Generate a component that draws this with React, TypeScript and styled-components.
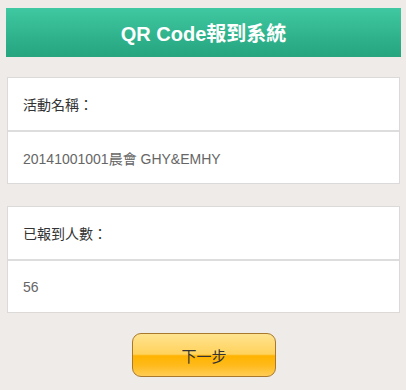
import React from "react";
import styled, { createGlobalStyle } from "styled-components";

const Global = createGlobalStyle`
  html, body { margin: 0; padding: 0; background: #eeebe9; }
  body { font-family: "Liberation Sans", "Noto Sans CJK TC", sans-serif; }
`;

const Page = styled.div`
  padding: 8px 5px 12px 6px;
  display: flex;
  flex-direction: column;
`;

const Header = styled.header`
  height: 49px;
  display: flex;
  align-items: center;
  justify-content: center;
  background: linear-gradient(#3fc8a1, #25a47e);
  color: #ffffff;
  font-size: 20px;
  font-weight: bold;
  margin-bottom: 20px;
`;

const Card = styled.section`
  margin: 0 1px 22px 1px;
  background: #ffffff;
  border: 1px solid #dcdad9;
  display: flex;
  flex-direction: column;
  &:last-of-type { margin-bottom: 20px; }
`;

const Row = styled.div<{ $value?: boolean }>`
  height: ${(p) => (p.$value ? 51 : 52)}px;
  display: flex;
  align-items: center;
  padding: 0 15px;
  font-size: 14px;
  color: ${(p) => (p.$value ? "#666666" : "#333333")};
  border-top: ${(p) => (p.$value ? "2px solid #dddddd" : "none")};
`;

const Actions = styled.div`
  display: flex;
  justify-content: center;
`;

const NextButton = styled.button`
  width: 144px;
  height: 44px;
  border: 1px solid #a8792c;
  border-radius: 9px;
  background: linear-gradient(
    #ffe390 0%,
    #ffd25c 48%,
    #ffb300 52%,
    #ffbb1c 75%,
    #ffcc55 100%
  );
  font-family: "Liberation Sans", "Noto Sans CJK TC", sans-serif;
  font-size: 15px;
  color: #333333;
  cursor: pointer;
  margin-left: 1px;
`;

export default function App() {
  return (
    <>
      <Global />
      <Page>
        <Header>QR Code報到系統</Header>
        <Card>
          <Row>活動名稱：</Row>
          <Row $value>20141001001晨會 GHY&amp;EMHY</Row>
        </Card>
        <Card>
          <Row>已報到人數：</Row>
          <Row $value>56</Row>
        </Card>
        <Actions>
          <NextButton>下一步</NextButton>
        </Actions>
      </Page>
    </>
  );
}
